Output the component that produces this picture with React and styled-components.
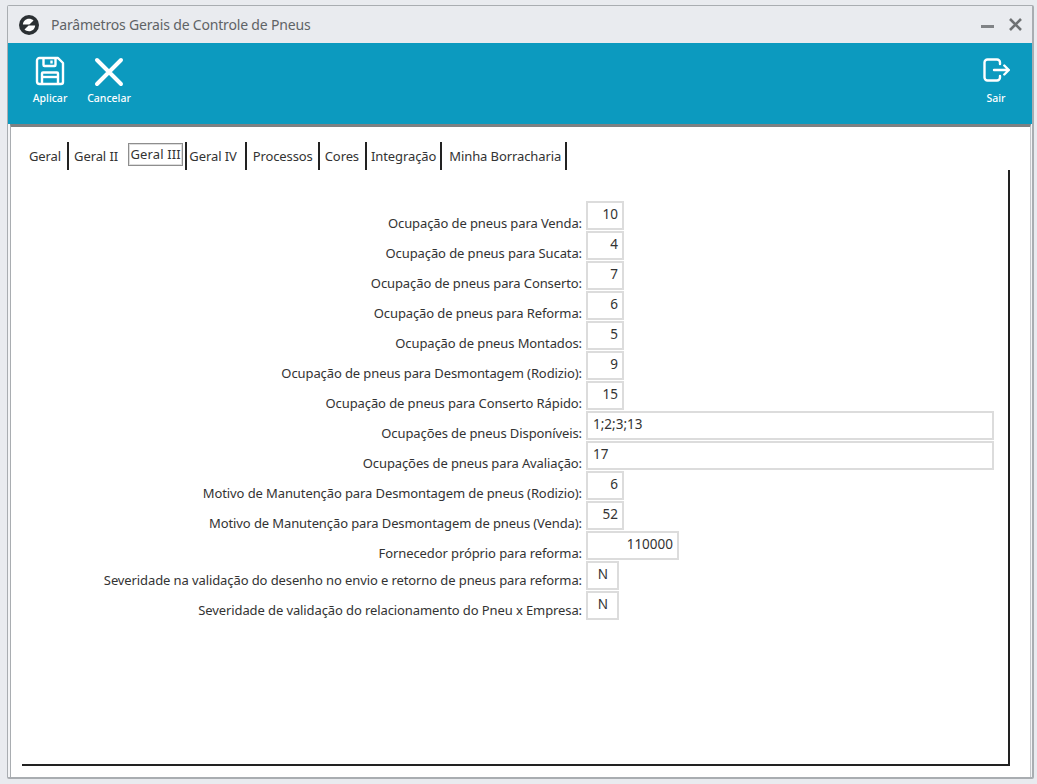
import React from 'react';
import styled, { createGlobalStyle } from 'styled-components';

const FIELDS = [
  { label: 'Ocupação de pneus para Venda:', value: '10', width: 38, align: 'right' },
  { label: 'Ocupação de pneus para Sucata:', value: '4', width: 38, align: 'right' },
  { label: 'Ocupação de pneus para Conserto:', value: '7', width: 38, align: 'right' },
  { label: 'Ocupação de pneus para Reforma:', value: '6', width: 38, align: 'right' },
  { label: 'Ocupação de pneus Montados:', value: '5', width: 38, align: 'right' },
  { label: 'Ocupação de pneus para Desmontagem (Rodizio):', value: '9', width: 38, align: 'right' },
  { label: 'Ocupação de pneus para Conserto Rápido:', value: '15', width: 38, align: 'right' },
  { label: 'Ocupações de pneus Disponíveis:', value: '1;2;3;13', width: 408, align: 'left' },
  { label: 'Ocupações de pneus para Avaliação:', value: '17', width: 408, align: 'left' },
  { label: 'Motivo de Manutenção para Desmontagem de pneus (Rodizio):', value: '6', width: 38, align: 'right' },
  { label: 'Motivo de Manutenção para Desmontagem de pneus (Venda):', value: '52', width: 38, align: 'right' },
  { label: 'Fornecedor próprio para reforma:', value: '110000', width: 93, align: 'right' },
  { label: 'Severidade na validação do desenho no envio e retorno de pneus para reforma:', value: 'N', width: 33, align: 'center', raised: true },
  { label: 'Severidade de validação do relacionamento do Pneu x Empresa:', value: 'N', width: 33, align: 'center', raised: true },
];

const TABS = [
  { name: 'Geral', left: 0, right: 6 },
  { name: 'Geral II', left: 5, right: 10, noBar: true },
  { name: 'Geral III', left: 0, right: 2, active: true },
  { name: 'Geral IV', left: 2, right: 8 },
  { name: 'Processos', left: 6, right: 5 },
  { name: 'Cores', left: 5, right: 6 },
  { name: 'Integração', left: 4, right: 4 },
  { name: 'Minha Borracharia', left: 7, right: 4 },
];

function SaveIcon() {
  return (
    <svg width="30" height="30" viewBox="0 0 30 30" fill="none" stroke="#fff" strokeWidth="2.4" strokeLinejoin="round">
      <path d="M4.5 2h18.500l5 5v19a2 2 0 0 1-2 2H4.500a2.500 2.500 0 0 1-2.500-2.500V4.500A2.500 2.500 0 0 1 4.500 2z" />
      <path d="M8.500 2v7a1 1 0 0 0 1 1h10a1 1 0 0 0 1-1V2" />
      <path d="M16.500 4.500v3" />
      <path d="M7 28V17.500a1 1 0 0 1 1-1h14a1 1 0 0 1 1 1V28" />
      <path d="M7 21h16" />
    </svg>
  );
}

function CancelIcon() {
  return (
    <svg width="30" height="30" viewBox="0 0 30 30" fill="none" stroke="#fff" strokeWidth="4" strokeLinecap="round">
      <path d="M3 3l24 24M27 3L3 27" />
    </svg>
  );
}

function ExitIcon() {
  return (
    <svg width="27" height="24" viewBox="0 0 27 24" fill="none" stroke="#fff" strokeWidth="2.400" strokeLinecap="round" strokeLinejoin="round">
      <path d="M17 6V4.500a3 3 0 0 0-3-3H4.500a3 3 0 0 0-3 3v15a3 3 0 0 0 3 3H14a3 3 0 0 0 3-3V18" />
      <path d="M11 12h14.800M21.300 7.500l4.500 4.500-4.500 4.500" />
    </svg>
  );
}

function AppLogo() {
  return (
    <svg width="20" height="20" viewBox="0 0 20 20">
      <circle cx="10" cy="10" r="10" fill="#2b3033" />
      <path d="M3.900 9.600C4 6.300 6.700 3.800 10 3.800c1.800 0 3.300.6 4.500 1.700L10.400 9.600z" fill="#fff" />
      <path d="M16.100 10.400C16 13.700 13.300 16.200 10 16.200c-1.800 0-3.300-.6-4.500-1.700l4.100-4.100z" fill="#fff" />
    </svg>
  );
}

export default function App() {
  return (
    <Page>
      <GlobalStyle />
      <Window>
        <TitleBar>
          <AppLogo />
          <Title>Parâmetros Gerais de Controle de Pneus</Title>
          <WindowButtons>
            <MinimizeButton />
            <CloseButton>
              <svg width="13" height="13" viewBox="0 0 13 13" stroke="#6e7173" strokeWidth="2.600">
                <path d="M1 1l11 11M12 1L1 12" />
              </svg>
            </CloseButton>
          </WindowButtons>
        </TitleBar>
        <Toolbar>
          <ToolButton $iconTop={13}>
            <SaveIcon />
            <ToolLabel>Aplicar</ToolLabel>
          </ToolButton>
          <ToolButton $iconTop={14}>
            <CancelIcon />
            <ToolLabel>Cancelar</ToolLabel>
          </ToolButton>
          <ToolSpacer />
          <ToolButton $iconTop={15}>
            <ExitIcon />
            <ToolLabel>Sair</ToolLabel>
          </ToolButton>
        </Toolbar>
        <Content>
          <Tabs>
            {TABS.map((tab) => (
              <Tab key={tab.name} $left={tab.left} $right={tab.right} $noBar={tab.noBar}>
                {tab.active ? <ActiveTabLabel>{tab.name}</ActiveTabLabel> : tab.name}
              </Tab>
            ))}
          </Tabs>
          <Panel>
            <Form>
              {FIELDS.map((field) => (
                <React.Fragment key={field.label}>
                  <FieldLabel $raised={field.raised}>{field.label}</FieldLabel>
                  <FieldInput $width={field.width} $align={field.align}>
                    {field.value}
                  </FieldInput>
                </React.Fragment>
              ))}
            </Form>
          </Panel>
        </Content>
      </Window>
    </Page>
  );
}

const GlobalStyle = createGlobalStyle`
  html, body {
    margin: 0;
    padding: 0;
    background: #e9ebef;
  }
  * {
    box-sizing: border-box;
  }
`;

const Page = styled.div`
  width: 1037px;
  height: 784px;
  padding: 5px 3px 5px 7px;
  background: #e9ebef;
  font-family: 'Noto Sans', 'Open Sans', sans-serif;
  font-size: 13px;
  color: #333;
`;

const Window = styled.div`
  height: 100%;
  display: flex;
  flex-direction: column;
  border: 1px solid #a9adb1;
  border-right-width: 2px;
  border-bottom-width: 2px;
  border-radius: 2px;
  background: #f3f4f6;
`;

const TitleBar = styled.div`
  height: 37px;
  flex-shrink: 0;
  display: flex;
  align-items: center;
  padding: 0 11px;
  background: #e9ebef;
`;

const Title = styled.span`
  margin-left: 12px;
  font-size: 14px;
  letter-spacing: -0.18px;
  color: #5f6366;
`;

const WindowButtons = styled.div`
  margin-left: auto;
  display: flex;
  align-items: center;
  gap: 15px;
`;

const MinimizeButton = styled.span`
  width: 13px;
  height: 3px;
  margin-top: 4px;
  background: #808386;
`;

const CloseButton = styled.span`
  display: flex;
  margin-right: -1px;
`;

const Toolbar = styled.div`
  height: 81px;
  flex-shrink: 0;
  display: flex;
  padding: 0 13px 0 19px;
  gap: 13px;
  background: #0c9abf;
`;

const ToolButton = styled.div`
  width: 46px;
  height: 62px;
  padding-top: ${(p) => p.$iconTop}px;
  display: flex;
  flex-direction: column;
  align-items: center;
`;

const ToolLabel = styled.span`
  margin-top: auto;
  font-size: 10.500px;
  line-height: 14px;
  font-weight: 500;
  white-space: nowrap;
  color: #fff;
`;

const ToolSpacer = styled.div`
  flex: 1;
`;

const Content = styled.div`
  flex: 1;
  min-height: 0;
  margin: 0 1px 0 2px;
  padding: 15px 20px 11px 11px;
  display: flex;
  flex-direction: column;
  background: #fff;
  border-top: 3px solid #7d8183;
  border-left: 1px solid #a9adb1;
  border-right: 1px solid #c4c7ca;
`;

const Tabs = styled.div`
  height: 28px;
  flex-shrink: 0;
  display: flex;
  padding-left: 7px;
`;

const Tab = styled.div`
  display: flex;
  align-items: center;
  height: 28px;
  padding: 0 ${(p) => p.$right}px 0 ${(p) => p.$left}px;
  border-right: ${(p) => (p.$noBar ? 'none' : '2px solid #222')};
  font-size: 13px;
  letter-spacing: -0.1px;
  color: #333;
  white-space: nowrap;
`;

const ActiveTabLabel = styled.span`
  height: 21px;
  margin: 0 1px 4px;
  padding: 0 0.500px;
  display: flex;
  align-items: center;
  letter-spacing: 0.13px;
  outline: 1px solid #8e8e8e;
  border: 1px solid #ddd;
`;

const Panel = styled.div`
  flex: 1;
  min-height: 0;
  padding-top: 31px;
  border-right: 2px solid #222;
  border-bottom: 2px solid #222;
`;

const Form = styled.div`
  display: grid;
  grid-template-columns: 560px 1fr;
  grid-auto-rows: 30px;
  column-gap: 4px;
`;

const FieldLabel = styled.div`
  padding-top: ${(p) => (p.$raised ? 10 : 13)}px;
  font-size: 13px;
  line-height: 18px;
  letter-spacing: -0.1px;
  text-align: right;
  white-space: nowrap;
  color: #333;
`;

const FieldInput = styled.div`
  width: ${(p) => p.$width}px;
  height: 29px;
  padding: 1px 4px 0 5px;
  border: 2px solid #dcdcdc;
  background: #fff;
  font-size: 13.500px;
  line-height: 20px;
  text-align: ${(p) => p.$align};
  color: #333;
`;
